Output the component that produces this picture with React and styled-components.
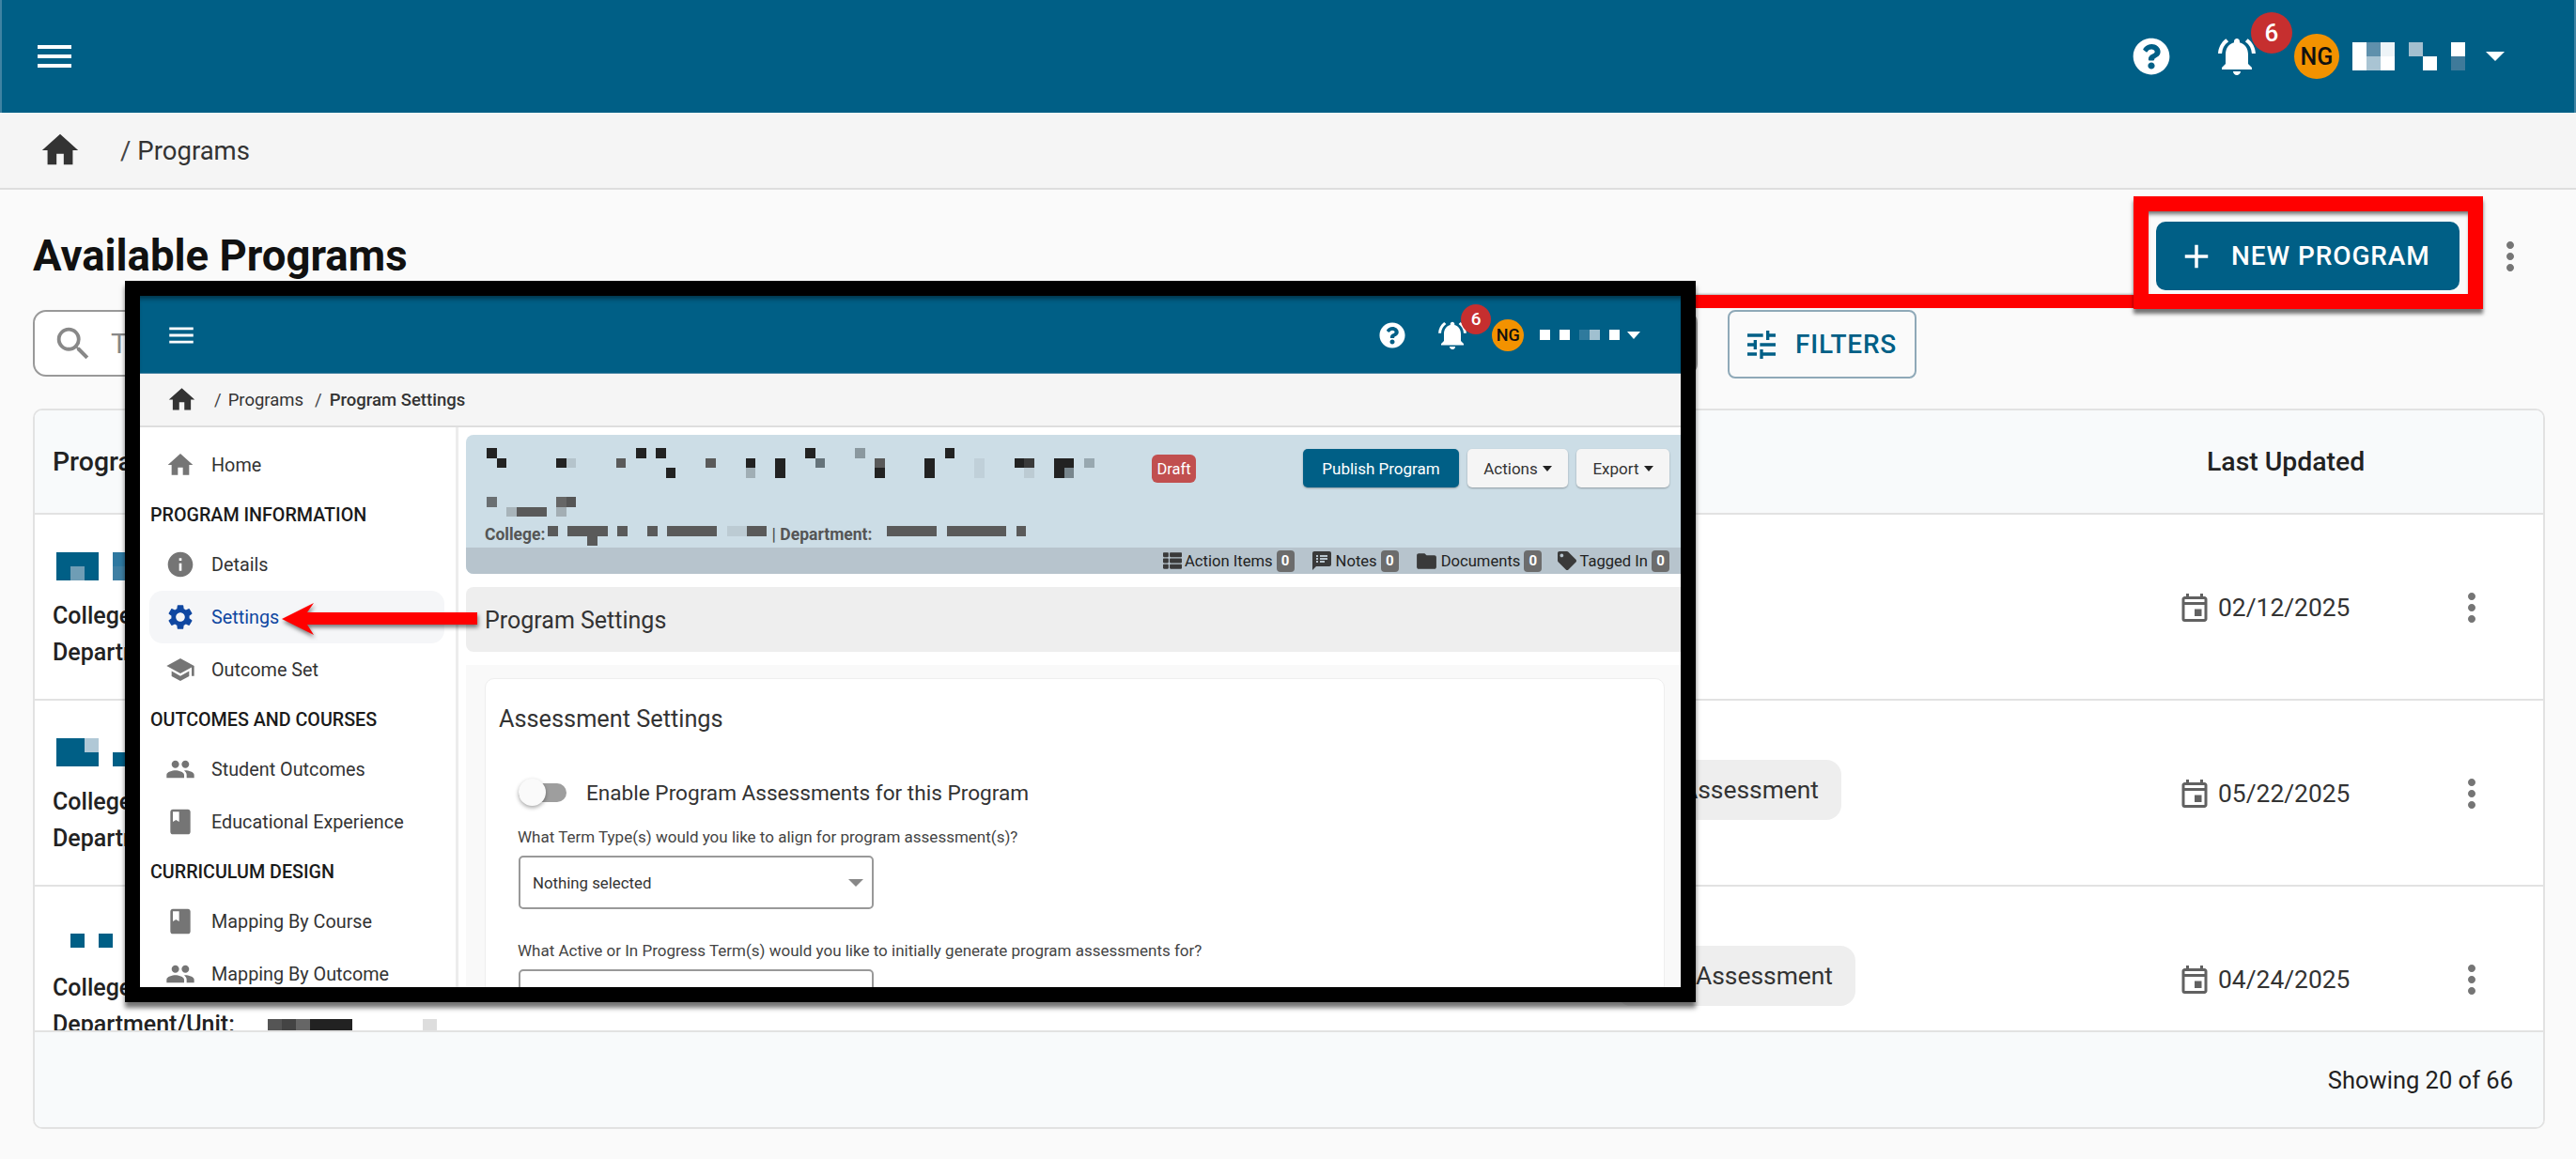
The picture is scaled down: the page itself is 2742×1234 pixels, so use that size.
import React from "react";
import styled, { createGlobalStyle } from "styled-components";
import {
  MdMenu,
  MdHome,
  MdNotificationsActive,
  MdAdd,
  MdMoreVert,
  MdSearch,
  MdTune,
  MdOutlineEvent,
  MdInfo,
  MdSettings,
  MdSchool,
  MdPeople,
  MdBook,
  MdSpeakerNotes,
  MdFolder,
} from "react-icons/md";
import { FaQuestionCircle, FaThList, FaTag } from "react-icons/fa";

const BLUE = "#005f86";
const D = "#222";
const G = "#5a5a5a";
const T = "#005f86";

const GlobalStyle = createGlobalStyle`
  html, body { margin: 0; padding: 0; background: #fafafa; }
  * { box-sizing: border-box; }
  body { font-family: Roboto, "Liberation Sans", sans-serif; }
`;

const Page = styled.div`
  position: relative;
  width: 2742px;
  height: 1234px;
  overflow: hidden;
  background: #fafafa;
  color: #222;
`;

// redacted text in the screenshot, drawn as blocks
const Mosaic = ({ unit, cols, rows, cells, className }) => (
  <svg
    className={className}
    width={cols * unit}
    height={rows * unit}
    viewBox={`0 0 ${cols * unit} ${rows * unit}`}
    shapeRendering="crispEdges"
    style={{ display: "block", flex: "none" }}
  >
    {cells.map(([c, r, color, w = 1], i) => (
      <rect key={i} x={c * unit} y={r * unit} width={w * unit} height={unit} fill={color} />
    ))}
  </svg>
);

/* ---------- app bars ---------- */

const TopBar = styled.header`
  display: flex;
  align-items: center;
  justify-content: space-between;
  flex: none;
  height: ${(p) => p.$height}px;
  padding: ${(p) => p.$pad};
  background: ${BLUE};
  color: #fff;
  border-left: ${(p) => (p.$edge ? "2px solid #3f83a3" : "none")};
  border-right: ${(p) => (p.$edge ? "2px solid #3f83a3" : "none")};
  border-bottom: ${(p) => (p.$edge ? "none" : "1px solid #4d88a6")};
  box-shadow: ${(p) => (p.$edge ? "none" : "inset 0 6px 5px -3px rgba(0,0,0,.45)")};
`;

const BarIcon = styled.span`
  display: flex;
  flex: none;
  margin-right: ${(p) => p.$mr || 0}px;
`;

const BarActions = styled.div`
  display: flex;
  align-items: center;
`;

const BellWrap = styled.span`
  position: relative;
  display: flex;
  flex: none;
`;

const CountBadge = styled.span`
  position: absolute;
  left: ${(p) => p.$left}px;
  top: ${(p) => p.$top}px;
  width: ${(p) => p.$size}px;
  height: ${(p) => p.$size}px;
  border-radius: 50%;
  background: #c62f2f;
  color: #fff;
  font-size: ${(p) => p.$font}px;
  font-weight: 500;
  display: flex;
  align-items: center;
  justify-content: center;
`;

const Avatar = styled.span`
  flex: none;
  width: ${(p) => p.$size}px;
  height: ${(p) => p.$size}px;
  margin: 0 ${(p) => p.$mr}px 0 ${(p) => p.$ml}px;
  border-radius: 50%;
  background: #f39200;
  color: #111;
  font-size: ${(p) => p.$font}px;
  font-weight: 500;
  display: flex;
  align-items: center;
  justify-content: center;
`;

const Caret = styled.span`
  flex: none;
  margin-left: ${(p) => p.$ml}px;
  width: 0;
  height: 0;
  border-left: ${(p) => p.$w}px solid transparent;
  border-right: ${(p) => p.$w}px solid transparent;
  border-top: ${(p) => p.$h}px solid ${(p) => p.$color || "#fff"};
`;

const Crumbs = styled.nav`
  display: flex;
  align-items: center;
  flex: none;
  height: ${(p) => p.$height}px;
  padding-left: ${(p) => p.$pad}px;
  background: #f5f5f5;
  border-bottom: 2px solid #dedede;
  font-size: ${(p) => p.$font}px;
  color: #333;
`;

const CrumbHome = styled.span`
  display: flex;
  color: #333;
  margin-right: ${(p) => p.$mr}px;
`;

const CrumbSep = styled.span`
  margin: 0 ${(p) => p.$gap}px 0 0;
  color: #444;
`;

const CrumbLink = styled.span`
  margin-right: ${(p) => p.$mr || 0}px;
  font-weight: ${(p) => (p.$current ? 500 : 400)};
`;

/* ---------- page content ---------- */

const Content = styled.main`
  display: flex;
  flex-direction: column;
  padding: 34px 33px 0 35px;
`;

const TitleRow = styled.div`
  display: flex;
  align-items: center;
  height: 73px;
  padding-right: 13px;
`;

const PageTitle = styled.h1`
  flex: 1;
  margin: 0;
  font-size: 45.5px;
  font-weight: 700;
  color: #111;
`;

const NewButton = styled.button`
  display: flex;
  align-items: center;
  gap: 16px;
  width: 323px;
  height: 73px;
  padding: 0 0 0 22px;
  border: 0;
  border-radius: 10px;
  background: ${BLUE};
  color: #fff;
  font: 500 28px Roboto, sans-serif;
  letter-spacing: 0.9px;
`;

const Kebab = styled.span`
  display: flex;
  flex: none;
  margin-left: ${(p) => p.$ml || 0}px;
  color: #757575;
`;

const FilterRow = styled.div`
  display: flex;
  gap: 32px;
  margin-top: 21px;
  align-items: flex-start;
`;

const SearchBox = styled.div`
  display: flex;
  align-items: center;
  gap: 17px;
  width: 1772px;
  height: 71px;
  padding-left: 18px;
  background: #fff;
  border: 2px solid #999;
  border-radius: 14px;
  color: #888;
  font-size: 30px;
`;

const FilterButton = styled.button`
  display: flex;
  align-items: center;
  gap: 16px;
  width: 201px;
  height: 73px;
  padding: 0 0 0 14px;
  background: transparent;
  border: 2px solid #8fa9b8;
  border-radius: 8px;
  color: ${BLUE};
  font: 500 28px Roboto, sans-serif;
  letter-spacing: 0.8px;
`;

const Table = styled.section`
  display: flex;
  flex-direction: column;
  height: 767px;
  margin-top: 32px;
  background: #fff;
  border: 2px solid #e2e2e2;
  border-radius: 10px;
  overflow: hidden;
`;

const columns = "1683px 602px 285px 48px";

const TableHead = styled.div`
  display: grid;
  grid-template-columns: ${columns};
  align-items: center;
  flex: none;
  height: 111px;
  background: #f8fafb;
  border-bottom: 2px solid #e2e2e2;
  font-size: 28.4px;
  font-weight: 500;
  color: #222;
`;

const HeadCell = styled.div`
  padding-left: ${(p) => p.$pad}px;
`;

const TableBody = styled.div`
  flex: 1;
  min-height: 0;
  overflow: hidden;
`;

const Row = styled.div`
  display: grid;
  grid-template-columns: ${columns};
  align-items: center;
  height: 198px;
  padding-top: 2px;
  border-bottom: 2px solid #e2e2e2;
`;

const Info = styled.div`
  display: flex;
  flex-direction: column;
  align-self: start;
  padding: 38px 0 0 19px;
`;

const ProgramMark = styled(Mosaic)`
  margin-left: 4px;
`;

const InfoLine = styled.div`
  display: flex;
  align-items: flex-start;
  height: 39px;
  line-height: 39px;
  margin-top: ${(p) => p.$mt || 0}px;
  font-size: 25px;
  font-weight: 500;
  color: #222;
`;

const LineMosaic = styled(Mosaic)`
  margin: 14px 0 0 35px;
`;

const ChipCell = styled.div`
  display: flex;
  padding-bottom: 8px;
`;

const Chip = styled.span`
  display: flex;
  align-items: center;
  justify-content: flex-end;
  width: ${(p) => p.$width}px;
  height: 64px;
  padding-right: 24px;
  background: #eee;
  border-radius: 16px;
  font-size: 26.4px;
  color: #333;
`;

const DateCell = styled.div`
  display: flex;
  align-items: center;
  gap: 7px;
  margin-left: -4px;
  font-size: 26.4px;
  color: #333;
  svg { color: #616161; flex: none; }
`;

const TableFoot = styled.div`
  display: flex;
  align-items: center;
  justify-content: flex-end;
  flex: none;
  height: 103px;
  padding-right: 32px;
  background: #f8fafb;
  border-top: 2px solid #e2e2e2;
  font-size: 25.5px;
  color: #222;
  margin-top: -2px;
  position: relative;
`;

/* ---------- the pasted screenshot on top of the page ---------- */

const Inset = styled.div`
  position: absolute;
  left: 133px;
  top: 299px;
  width: 1672px;
  height: 768px;
  border: 16px solid #000;
  box-shadow: 0 6px 5px rgba(0, 0, 0, 0.55);
  background: #fff;
  overflow: hidden;
  display: flex;
  flex-direction: column;
`;

const InsetBody = styled.div`
  display: flex;
  flex: 1;
  min-height: 0;
`;

const Sidebar = styled.aside`
  flex: none;
  width: 339px;
  padding-top: 12px;
  border-right: 3px solid #ececec;
`;

const NavItem = styled.div`
  display: flex;
  align-items: center;
  gap: 20px;
  height: 56px;
  margin: 0 12px 0 10px;
  padding-left: 20px;
  border-radius: 14px;
  font-size: 19.8px;
  color: ${(p) => (p.$active ? "#0f47a1" : "#333")};
  background: ${(p) => (p.$active ? "#f5f6f8" : "transparent")};
`;

const NavIcon = styled.span`
  display: flex;
  align-items: center;
  justify-content: center;
  flex: none;
  width: 26px;
  color: ${(p) => (p.$active ? "#0f47a1" : "#757575")};
  svg { flex: none; }
`;

const NavHeading = styled.div`
  display: flex;
  align-items: center;
  height: 50px;
  padding-left: 11px;
  font-size: 19.7px;
  font-weight: 500;
  color: #1a1a1a;
`;

const InsetMain = styled.div`
  flex: 1;
  min-width: 0;
  padding: 8px 0 0 8px;
`;

const ProgramHeader = styled.div`
  background: #ccdde6;
  border-radius: 8px 0 0 8px;
  overflow: hidden;
`;

const HeaderTop = styled.div`
  display: flex;
  align-items: flex-start;
  height: 120px;
  padding: 14px 12px 0 22px;
`;

const TitleCol = styled.div`
  display: flex;
  flex-direction: column;
  flex: none;
  width: 647px;
`;

const SecondLine = styled(Mosaic)`
  margin: 20px 0 10px;
`;

const MetaLine = styled.div`
  display: flex;
  align-items: flex-start;
  height: 22px;
  margin-left: -2px;
  font-size: 17.5px;
  line-height: 18px;
  font-weight: 700;
  color: #555;
  white-space: nowrap;
`;

const MetaText = styled.span`
  margin: 0 ${(p) => p.$mr || 0}px 0 ${(p) => p.$ml || 0}px;
`;

const DraftBadge = styled.span`
  display: flex;
  align-items: center;
  justify-content: center;
  flex: none;
  width: 47px;
  height: 30px;
  margin: 7px 0 0 61px;
  background: #c14f4f;
  border-radius: 6px;
  color: #fff;
  font-size: 16.5px;
`;

const HeaderActions = styled.div`
  display: flex;
  gap: 9px;
  margin: 1px 0 0 auto;
`;

const HeaderButton = styled.button`
  display: flex;
  align-items: center;
  justify-content: center;
  gap: 5px;
  width: ${(p) => p.$width}px;
  height: 41px;
  border: 0;
  border-radius: 5px;
  background: ${(p) => (p.$primary ? BLUE : "#f5f5f5")};
  color: ${(p) => (p.$primary ? "#fff" : "#333")};
  box-shadow: 0 1px 2px rgba(0, 0, 0, 0.3);
  font: 400 17px Roboto, sans-serif;
`;

const HeaderStrip = styled.div`
  display: flex;
  align-items: center;
  justify-content: flex-end;
  gap: 17px;
  height: 28px;
  padding-right: 12px;
  background: #b7c4cd;
  font-size: 16.6px;
  color: #222;
`;

const StripItem = styled.span`
  display: flex;
  align-items: center;
  gap: 3px;
  svg { color: #3a3a3a; flex: none; }
`;

const StripCount = styled.span`
  display: flex;
  align-items: center;
  justify-content: center;
  width: 19px;
  height: 23px;
  margin-left: 1px;
  background: #6c6c6c;
  border-radius: 4px;
  color: #fff;
  font-size: 15px;
  font-weight: 700;
`;

const SectionBar = styled.div`
  display: flex;
  align-items: center;
  height: 69px;
  margin-top: 14px;
  padding: 2px 0 0 20px;
  background: #eee;
  border-radius: 8px 0 0 8px;
  font-size: 25px;
  color: #333;
`;

const SettingsPanel = styled.div`
  margin-top: 14px;
  padding: 14px 17px 0 20px;
  background: #f9f9f9;
`;

const Card = styled.div`
  height: 400px;
  padding: 28px 0 0 14px;
  background: #fff;
  border: 1px solid #eee;
  border-radius: 10px;
`;

const CardTitle = styled.h2`
  margin: 0;
  height: 30px;
  line-height: 30px;
  font-size: 25.3px;
  font-weight: 400;
  color: #333;
`;

const ToggleRow = styled.div`
  display: flex;
  align-items: center;
  gap: 21px;
  margin: 48px 0 0 21px;
  height: 30px;
  font-size: 22.6px;
  color: #333;
`;

const Toggle = styled.span`
  position: relative;
  flex: none;
  width: 51px;
  height: 20px;
  border-radius: 10px;
  background: #9e9e9e;
  &::after {
    content: "";
    position: absolute;
    left: 0;
    top: -5px;
    width: 29px;
    height: 29px;
    border-radius: 50%;
    background: #fafafa;
    box-shadow: 0 2px 4px rgba(0, 0, 0, 0.35);
  }
`;

const FieldLabel = styled.div`
  margin: ${(p) => p.$mt}px 0 0 20px;
  height: 24px;
  line-height: 24px;
  font-size: 17px;
  color: #444;
`;

const SelectBox = styled.div`
  display: flex;
  align-items: center;
  justify-content: space-between;
  width: 378px;
  height: 57px;
  margin: 8px 0 0 21px;
  padding: 0 9px 0 13px;
  border: 2px solid #999;
  border-radius: 5px;
  font-size: 16.8px;
  color: #333;
`;

/* ---------- red annotations ---------- */

const RedBox = styled.div`
  position: absolute;
  left: 2271px;
  top: 209px;
  width: 372px;
  height: 120px;
  border: 16px solid #f00;
  box-shadow: 0 5px 4px rgba(0, 0, 0, 0.55), inset 0 5px 4px -2px rgba(0, 0, 0, 0.55);
`;

const RedLine = styled.div`
  position: absolute;
  left: 1805px;
  top: 314px;
  width: 466px;
  height: 14px;
  background: #f00;
  box-shadow: 0 -1px 2px rgba(0, 0, 0, 0.3);
`;

const ArrowMark = styled.svg`
  position: absolute;
  left: 298px;
  top: 640px;
  filter: drop-shadow(1px 3px 2px rgba(0, 0, 0, 0.5));
`;

const userCells = [
  [0, 0, "#fff"], [1, 0, "#5f90ac"], [2, 0, "#eef4f7"],
  [0, 1, "#fff"], [1, 1, "#a9c4d3"], [2, 1, "#fff"],
  [4, 0, "#a3bfcf"], [5, 1, "#fff"],
  [7, 0, "#fff"], [7, 1, "#3f7a9a"],
];

const insetUserCells = [
  [0, 0, "#fff"], [2, 0, "#fff"], [4, 0, "#2f7a9d"], [5, 0, "#a0c0d0"], [7, 0, "#fff"],
];

const titleCells = [
  [0, 0, D], [15, 0, D], [17, 0, D], [32, 0, D], [37, 0, "#8a989f"], [46, 0, D],
  [1, 1, D], [7, 1, D], [8, 1, "#b5c4cc"], [13, 1, G], [22, 1, G], [26, 1, D], [29, 1, D],
  [33, 1, "#65737a"], [39, 1, G], [44, 1, D], [49, 1, "#c0d0d9"], [53, 1, D], [54, 1, "#3a3a3a"],
  [57, 1, D], [58, 1, D], [60, 1, "#98a8b0"],
  [18, 2, D], [26, 2, "#a0aeb5"], [29, 2, D], [39, 2, D], [44, 2, D], [49, 2, "#c0d0d9"],
  [54, 2, "#bccbd3"], [57, 2, D], [58, 2, "#78868d"],
];

const subtitleCells = [
  [0, 0, "#6a6f72"], [7, 0, "#666"], [8, 0, "#555"],
  [2, 1, "#a8b4ba"], [3, 1, G, 3], [7, 1, "#a3aeb4"],
];

const collegeCells = [
  [0, 0, G], [2, 0, G, 4], [7, 0, G], [10, 0, G], [12, 0, G, 5],
  [18, 0, "#bccbd3", 2], [20, 0, G, 2], [4, 1, G],
];

const deptCells = [[0, 0, G, 5], [6, 0, G, 6], [13, 0, G]];

const programs = [
  {
    cells: [[0, 0, T, 3], [0, 1, T], [1, 1, "#6f9db5"], [2, 1, T], [4, 0, "#2e78a0"], [4, 1, "#3f7fa3"]],
    date: "02/12/2025",
  },
  {
    cells: [[0, 0, T, 2], [2, 0, "#b0c8d6"], [0, 1, T, 3], [4, 1, T]],
    chip: 240,
    date: "05/22/2025",
  },
  {
    cells: [[1, 0.67, T], [3, 0.67, T]],
    chip: 255,
    date: "04/24/2025",
    deptCells: [[0, 0, "#555"], [1, 0, "#444"], [2, 0, "#666"], [3, 0, "#222", 3], [11, 0, "#ddd"]],
  },
];

const navGroups = [
  { items: [{ label: "Home", icon: MdHome }] },
  {
    heading: "PROGRAM INFORMATION",
    items: [
      { label: "Details", icon: MdInfo },
      { label: "Settings", icon: MdSettings, active: true },
      { label: "Outcome Set", icon: MdSchool },
    ],
  },
  {
    heading: "OUTCOMES AND COURSES",
    items: [
      { label: "Student Outcomes", icon: MdPeople },
      { label: "Educational Experience", icon: MdBook },
    ],
  },
  {
    heading: "CURRICULUM DESIGN",
    items: [
      { label: "Mapping By Course", icon: MdBook },
      { label: "Mapping By Outcome", icon: MdPeople },
    ],
  },
];

const stripItems = [
  { label: "Action Items", icon: <FaThList size={20} /> },
  { label: "Notes", icon: <MdSpeakerNotes size={24} /> },
  { label: "Documents", icon: <MdFolder size={25} /> },
  { label: "Tagged In", icon: <FaTag size={20} /> },
];

const App = () => {
  return (
    <Page>
      <GlobalStyle />
      <TopBar $edge $height={120} $pad="0 74px 0 32px">
        <MdMenu size={48} />
        <BarActions>
          <BarIcon $mr={47}>
            <FaQuestionCircle size={40} />
          </BarIcon>
          <BellWrap>
            <MdNotificationsActive size={48} />
            <CountBadge $left={39} $top={-23} $size={44} $font={26}>6</CountBadge>
          </BellWrap>
          <Avatar $size={48} $ml={37} $mr={14} $font={25}>NG</Avatar>
          <Mosaic unit={15} cols={8} rows={2} cells={userCells} />
          <Caret $ml={22} $w={10} $h={10} />
        </BarActions>
      </TopBar>
      <Crumbs $height={82} $pad={41} $font={27.5}>
        <CrumbHome $mr={41}><MdHome size={46} /></CrumbHome>
        <CrumbSep $gap={7}>/</CrumbSep>
        <CrumbLink>Programs</CrumbLink>
      </Crumbs>

      <Content>
        <TitleRow>
          <PageTitle>Available Programs</PageTitle>
          <NewButton>
            <MdAdd size={42} />
            NEW PROGRAM
          </NewButton>
          <Kebab $ml={30}><MdMoreVert size={48} /></Kebab>
        </TitleRow>
        <FilterRow>
          <SearchBox>
            <MdSearch size={46} />
            Type to search programs
          </SearchBox>
          <FilterButton>
            <MdTune size={40} />
            FILTERS
          </FilterButton>
        </FilterRow>
        <Table>
          <TableHead>
            <HeadCell $pad={19}>Program</HeadCell>
            <HeadCell $pad={0} />
            <HeadCell $pad={27}>Last Updated</HeadCell>
          </TableHead>
          <TableBody>
            {programs.map((program) => (
              <Row key={program.date}>
                <Info>
                  <ProgramMark unit={15} cols={6} rows={2} cells={program.cells} />
                  <InfoLine $mt={18}>College:</InfoLine>
                  <InfoLine>
                    Department/Unit:
                    {program.deptCells && (
                      <LineMosaic unit={15} cols={12} rows={1} cells={program.deptCells} />
                    )}
                  </InfoLine>
                </Info>
                <ChipCell>
                  {program.chip && <Chip $width={program.chip}>Assessment</Chip>}
                </ChipCell>
                <DateCell>
                  <MdOutlineEvent size={36} />
                  {program.date}
                </DateCell>
                <Kebab><MdMoreVert size={48} /></Kebab>
              </Row>
            ))}
          </TableBody>
          <TableFoot>Showing 20 of 66</TableFoot>
        </Table>
      </Content>

      <RedLine />
      <RedBox />

      <Inset>
        <TopBar $height={83} $pad="1px 43px 0 27px">
          <MdMenu size={34} />
          <BarActions>
            <BarIcon $mr={32}>
              <FaQuestionCircle size={28} />
            </BarIcon>
            <BellWrap>
              <MdNotificationsActive size={36} />
              <CountBadge $left={27} $top={-15} $size={32} $font={19}>6</CountBadge>
            </BellWrap>
            <Avatar $size={34} $ml={24} $mr={17} $font={18}>NG</Avatar>
            <Mosaic unit={10.6} cols={8} rows={1} cells={insetUserCells} />
            <Caret $ml={8} $w={7} $h={8} />
          </BarActions>
        </TopBar>
        <Crumbs $height={57} $pad={28} $font={18.5}>
          <CrumbHome $mr={18}><MdHome size={33} /></CrumbHome>
          <CrumbSep $gap={7}>/</CrumbSep>
          <CrumbLink $mr={12}>Programs</CrumbLink>
          <CrumbSep $gap={8}>/</CrumbSep>
          <CrumbLink $current>Program Settings</CrumbLink>
        </Crumbs>
        <InsetBody>
          <Sidebar>
            {navGroups.map((group, i) => (
              <React.Fragment key={i}>
                {group.heading && <NavHeading>{group.heading}</NavHeading>}
                {group.items.map(({ label, icon: Icon, active }) => (
                  <NavItem key={label} $active={active}>
                    <NavIcon $active={active}><Icon size={32} /></NavIcon>
                    {label}
                  </NavItem>
                ))}
              </React.Fragment>
            ))}
          </Sidebar>
          <InsetMain>
            <ProgramHeader>
              <HeaderTop>
                <TitleCol>
                  <Mosaic unit={10.6} cols={61} rows={3} cells={titleCells} />
                  <SecondLine unit={10.6} cols={9} rows={2} cells={subtitleCells} />
                  <MetaLine>
                    <MetaText $mr={3}>College:</MetaText>
                    <Mosaic unit={10.6} cols={22} rows={2} cells={collegeCells} />
                    <MetaText $ml={5} $mr={16}>| Department:</MetaText>
                    <Mosaic unit={10.6} cols={14} rows={1} cells={deptCells} />
                  </MetaLine>
                </TitleCol>
                <DraftBadge>Draft</DraftBadge>
                <HeaderActions>
                  <HeaderButton $primary $width={166}>Publish Program</HeaderButton>
                  <HeaderButton $width={107}>
                    Actions
                    <Caret $ml={0} $w={5} $h={6} $color="#222" />
                  </HeaderButton>
                  <HeaderButton $width={99}>
                    Export
                    <Caret $ml={0} $w={5} $h={6} $color="#222" />
                  </HeaderButton>
                </HeaderActions>
              </HeaderTop>
              <HeaderStrip>
                {stripItems.map((item) => (
                  <StripItem key={item.label}>
                    {item.icon}
                    {item.label}
                    <StripCount>0</StripCount>
                  </StripItem>
                ))}
              </HeaderStrip>
            </ProgramHeader>
            <SectionBar>Program Settings</SectionBar>
            <SettingsPanel>
              <Card>
                <CardTitle>Assessment Settings</CardTitle>
                <ToggleRow>
                  <Toggle />
                  Enable Program Assessments for this Program
                </ToggleRow>
                <FieldLabel $mt={20}>What Term Type(s) would you like to align for program assessment(s)?</FieldLabel>
                <SelectBox>
                  Nothing selected
                  <Caret $ml={0} $w={8} $h={8} $color="#888" />
                </SelectBox>
                <FieldLabel $mt={32}>What Active or In Progress Term(s) would you like to initially generate program assessments for?</FieldLabel>
                <SelectBox />
              </Card>
            </SettingsPanel>
          </InsetMain>
        </InsetBody>
      </Inset>

      <ArrowMark width="214" height="40" viewBox="0 0 214 40">
        <polygon points="2,19 36,2 29,12 210,12 210,25 29,25 36,36" fill="#f00" />
      </ArrowMark>
    </Page>
  );
};

export default App;
